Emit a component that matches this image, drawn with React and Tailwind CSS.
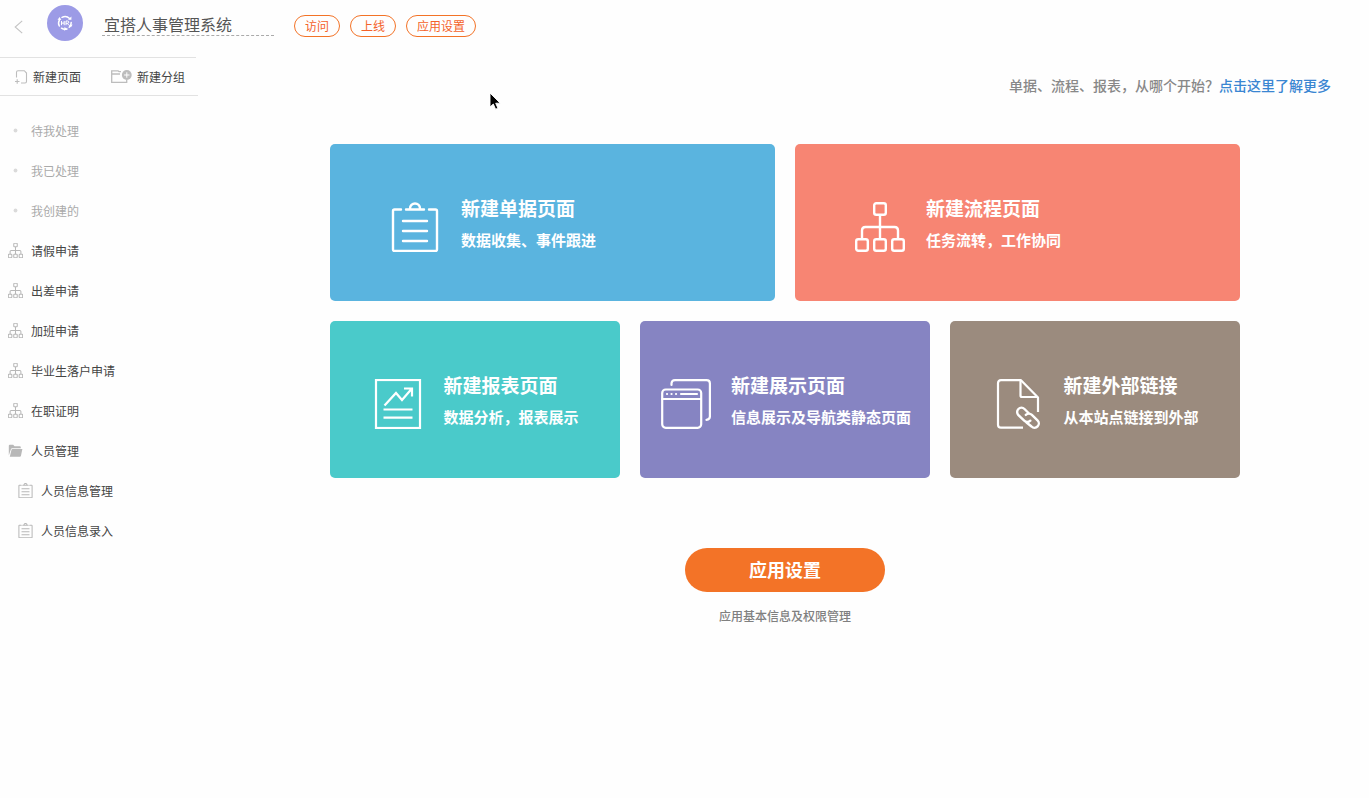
import React from 'react';

function Svg({ className, children, viewBox = '0 0 50 50' }) {
  return (
    <svg viewBox={viewBox} className={className} fill="none" stroke="currentColor" aria-hidden="true">
      {children}
    </svg>
  );
}

function FlowIcon({ className, strokeWidth = 2 }) {
  return (
    <Svg className={className}>
      <g strokeWidth={strokeWidth} strokeLinejoin="round">
        <rect x="19.2" y="1.2" width="11.6" height="11.6" rx="2" />
        <rect x="1.2" y="37.2" width="11.6" height="11.6" rx="2" />
        <rect x="19.2" y="37.2" width="11.6" height="11.6" rx="2" />
        <rect x="37.2" y="37.2" width="11.6" height="11.6" rx="2" />
        <path d="M25 13v24M7 37v-8.500q0-3.500 3.500-3.500h29q3.500 0 3.500 3.500v8.500" />
      </g>
    </Svg>
  );
}

function FormIcon({ className, strokeWidth = 2 }) {
  return (
    <Svg className={className}>
      <g strokeWidth={strokeWidth} strokeLinecap="round" strokeLinejoin="round">
        <path d="M11 7.500H4.500Q3 7.500 3 9v38.500Q3 49 4.500 49h41q1.500 0 1.500-1.500V9q0-1.500-1.500-1.500H39" />
        <path d="M16 7.500h18M20 6.500a5 5 0 0 1 10 0M13 19h24M13 29h24M13 39h24" />
      </g>
    </Svg>
  );
}

function ReportIcon({ className }) {
  return (
    <Svg className={className}>
      <rect x="3" y="1" width="44" height="48" strokeWidth="2.200" />
      <path d="M11.500 26.500 23 14l6 7L38.500 10M31 9.500h8v8" strokeWidth="2.200" />
      <path d="M10.500 30.500h29M10.500 38.700h29" strokeWidth="2.200" />
    </Svg>
  );
}

function WindowsIcon({ className }) {
  return (
    <Svg className={className}>
      <g strokeWidth="2.200" strokeLinecap="round">
        <path d="M10.500 6V4.500Q10.500 1.200 14 1.200h31.500Q48.900 1.200 48.900 4.500v33q0 3-3.400 3.300" />
        <rect x="1.200" y="10.500" width="39" height="38.300" rx="3.500" />
        <path d="M1.500 20h38.500" />
        <path d="M20 15h16" />
        <path d="M6 15h.1M10.500 15h.1M15 15h.1" />
      </g>
    </Svg>
  );
}

function LinkIcon({ className }) {
  return (
    <Svg className={className}>
      <path
        d="M30 48.700H8Q5 48.700 5 45.700V4.200Q5 1.200 8 1.200h20L45 18.500V33"
        strokeWidth="2.200"
        strokeLinejoin="round"
      />
      <path d="M27.500 1.500v15q0 1.500 1.500 1.500h16" strokeWidth="2.200" />
      <g strokeWidth="2.400" strokeLinecap="round">
        <path d="M35.500 34 31.500 30a4.300 4.300 0 0 0-6.100 6.100l5.800 5.600a4.300 4.300 0 0 0 6.100 0" />
        <path d="M33.500 43.500l5 4a4.300 4.300 0 0 0 6-6.200l-5.600-5.400a4.300 4.300 0 0 0-6.100 0" />
      </g>
    </Svg>
  );
}

function FolderIcon({ className }) {
  return (
    <Svg className={className} viewBox="0 0 15 15">
      <path
        d="M.8 12.600V2.800q0-1 1-1h3.400l1.300 1.500h5.300q1 0 1 1v1H4.200q-1 0-1.300 1zM1.800 13.800l1.700-7.100q.2-.7.900-.7h10l-1.500 7q-.2.800-1 .8z"
        fill="currentColor"
        stroke="none"
      />
    </Svg>
  );
}

function DotIcon({ className }) {
  return (
    <Svg className={className} viewBox="0 0 15 15">
      <circle cx="7.500" cy="7.500" r="1.900" fill="#dadada" stroke="none" />
    </Svg>
  );
}

function AppLogo() {
  return (
    <Svg className="size-9 shrink-0" viewBox="0 0 36 36">
      <circle cx="18" cy="18" r="18" fill="#9c9be6" stroke="none" />
      <g className="text-white" strokeWidth="1.500" strokeLinecap="round">
        <path d="M12.300 21a6.400 6.400 0 0 1 .2-6.200M15 12.300a6.400 6.400 0 0 1 7.600 1.200M24.200 17.500a6.400 6.400 0 0 1-2 4.800M20 24a6.400 6.400 0 0 1-5.500-.8" />
      </g>
      <g className="text-white" fill="currentColor" stroke="none">
        <path d="M21 14.800h3.400v-3.300zM25.600 19.500l-3.700.5 2 2.500zM17.500 22l-.3 3.800 3-1.700zM10.500 14.800l3.800.3-1.600-3z" />
      </g>
      <path
        className="text-white"
        d="M14.500 16v4.200M17.200 16v4.200M14.500 18.100h2.700M19 20.200V16h1.600a1.100 1.100 0 0 1 0 2.300H19M20.500 18.300l1.200 1.900"
        strokeWidth="1"
      />
    </Svg>
  );
}

const pages = [
  { label: '待我处理', Icon: DotIcon, muted: true },
  { label: '我已处理', Icon: DotIcon, muted: true },
  { label: '我创建的', Icon: DotIcon, muted: true },
  { label: '请假申请', Icon: FlowIcon },
  { label: '出差申请', Icon: FlowIcon },
  { label: '加班申请', Icon: FlowIcon },
  { label: '毕业生落户申请', Icon: FlowIcon },
  { label: '在职证明', Icon: FlowIcon },
  { label: '人员管理', Icon: FolderIcon },
  { label: '人员信息管理', Icon: FormIcon, nested: true },
  { label: '人员信息录入', Icon: FormIcon, nested: true },
];

const primaryCards = [
  { title: '新建单据页面', text: '数据收集、事件跟进', Icon: FormIcon, color: 'bg-[#5ab4df]' },
  { title: '新建流程页面', text: '任务流转，工作协同', Icon: FlowIcon, color: 'bg-[#f78573]' },
];

const secondaryCards = [
  { title: '新建报表页面', text: '数据分析，报表展示', Icon: ReportIcon, color: 'bg-[#4acaca]' },
  { title: '新建展示页面', text: '信息展示及导航类静态页面', Icon: WindowsIcon, color: 'bg-[#8684c2]' },
  { title: '新建外部链接', text: '从本站点链接到外部', Icon: LinkIcon, color: 'bg-[#9b8b7e]' },
];

function Card({ title, text, Icon, color, align }) {
  return (
    <button
      type="button"
      className={`flex h-[157px] items-start rounded-[5px] pt-[52px] text-left text-white ${color} ${align}`}
    >
      <Icon className="mt-1.5 size-[50px] shrink-0" strokeWidth={2.4} />
      <span className="flex flex-col gap-2 font-bold whitespace-nowrap">
        <span className="text-[19px] leading-6">{title}</span>
        <span className="text-[15px] leading-6">{text}</span>
      </span>
    </button>
  );
}

function Pill({ children }) {
  return (
    <button
      type="button"
      className="h-[22px] rounded-full border border-[#f37327] px-2.5 text-xs leading-5 text-[#f4622a]"
    >
      {children}
    </button>
  );
}

export default function App() {
  return (
    <div className="min-h-screen bg-[#fefefe] font-['Noto_Sans_CJK_SC',sans-serif] text-[#444]">
      <header className="flex h-[57px] items-start pl-3.5">
        <button type="button" aria-label="返回" className="mt-5 mr-6 text-[#c4c4c4]">
          <Svg className="h-[14px] w-[9px]" viewBox="0 0 9 14">
            <path d="M8.200.8 1.200 7l7 6.200" strokeWidth="1.100" />
          </Svg>
        </button>
        <div className="mt-[5px]">
          <AppLogo />
        </div>
        <input
          aria-label="应用名称"
          defaultValue="宜搭人事管理系统"
          className="mt-3 ml-[19px] h-6 w-[172px] border-b border-dashed border-[#aaa] bg-transparent px-0.5 text-base text-[#555] outline-none"
        />
        <div className="mt-[15px] ml-5 flex gap-2.5">
          <Pill>访问</Pill>
          <Pill>上线</Pill>
          <Pill>应用设置</Pill>
        </div>
      </header>

      <div className="flex">
        <aside className="w-[201px] shrink-0 pr-[3px] text-xs">
          <div className="mr-0.5 border-t border-[#e2e2e2]" />
          <div className="flex h-[38px] items-center border-b border-[#e2e2e2] pl-3.5">
            <button type="button" className="flex items-center gap-[5px]">
              <Svg className="size-[14px] text-[#bdbdbd]" viewBox="0 0 14 14">
                <path d="M2.500 7.500V2.200Q2.500.7 4 .7h6.300L12.500 3v8.500q0 1.500-1.500 1.500H7M1 11.500h4.500M3.200 9.300v4.400" strokeWidth="1.100" />
              </Svg>
              新建页面
            </button>
            <button type="button" className="ml-[30px] flex items-center gap-[5px]">
              <Svg className="h-[14px] w-[21px] text-[#bdbdbd]" viewBox="0 0 21 14">
                <path d="M10 1.600H8L7 .8H.7v11.500h15V10M.7 4H9" strokeWidth="1.300" />
                <circle cx="15.800" cy="5" r="4.900" fill="currentColor" stroke="none" />
                <path d="M15.800 2.300v5.400M13.100 5h5.400" stroke="#fefefe" strokeWidth="1" />
              </Svg>
              新建分组
            </button>
          </div>
          <nav className="pt-[15px]">
            {pages.map(({ label, Icon, muted, nested }) => (
              <a
                key={label}
                href="#"
                className={`flex h-10 items-center gap-2 ${nested ? 'pl-[18px]' : 'pl-2'} ${muted ? 'text-[#aaa]' : 'text-[#444]'}`}
              >
                <Icon className="mb-0.5 size-[15px] shrink-0 text-[#b8b8b8]" strokeWidth={3.4} />
                {label}
              </a>
            ))}
          </nav>
        </aside>

        <main className="min-w-0 flex-1">
          <p className="pt-[18px] pr-[38px] text-right text-sm font-medium text-[#888]">
            单据、流程、报表，从哪个开始？
            <a href="#" className="text-[#3a86d2]">点击这里了解更多</a>
          </p>
          <div className="mx-auto mt-[49px] flex max-w-[910px] flex-col gap-5">
            <div className="grid grid-cols-2 gap-5">
              {primaryCards.map((card) => (
                <Card key={card.title} {...card} align="gap-[21px] pl-15" />
              ))}
            </div>
            <div className="grid grid-cols-3 gap-5">
              {secondaryCards.map((card) => (
                <Card key={card.title} {...card} align="justify-center gap-5 pl-0.5" />
              ))}
            </div>
          </div>
          <div className="mt-[70px] flex flex-col items-center gap-4">
            <button type="button" className="h-11 w-[200px] rounded-full bg-[#f37327] pb-0.5 text-lg font-bold text-white">
              应用设置
            </button>
            <p className="text-xs font-medium text-[#808080]">应用基本信息及权限管理</p>
          </div>
        </main>
      </div>

      <svg
        viewBox="0 0 12 18"
        className="pointer-events-none absolute top-[92px] left-[489px] h-[18px] w-3"
        aria-hidden="true"
      >
        <path d="M1 1v14l3.300-3 2.300 5.200 2.300-1-2.200-5h4.500z" fill="#000" stroke="#fff" strokeWidth=".9" />
      </svg>
    </div>
  );
}
